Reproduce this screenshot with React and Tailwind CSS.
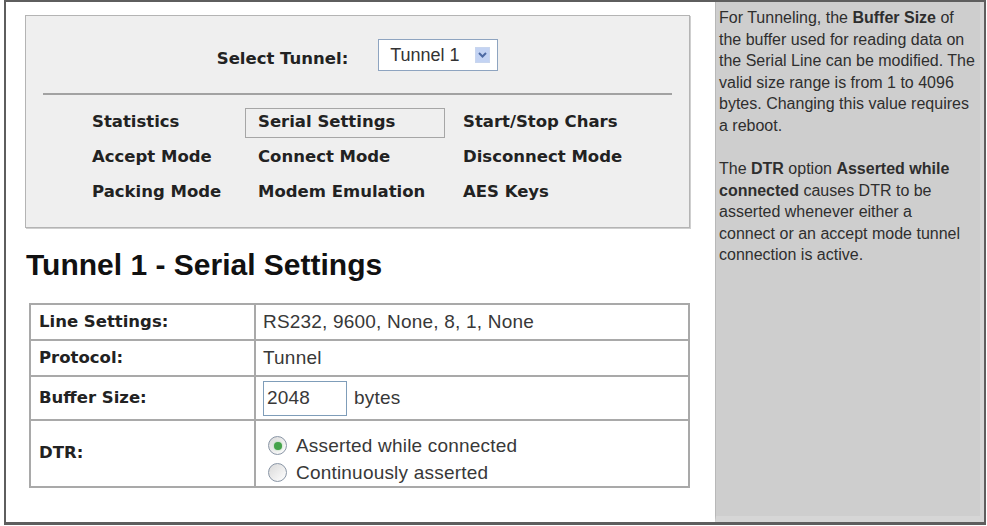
const bold = { fontFamily: '"DejaVu Sans", sans-serif' };

function Radio({ checked }) {
  return (
    <span className="mr-[9px] flex h-[19px] w-[19px] items-center justify-center rounded-full border border-[#8a96a6] bg-gradient-to-br from-[#d9d9d9] to-white">
      {checked && <span className="h-[8px] w-[8px] rounded-full bg-[#46a34b] shadow-[0_0_2px_#8fd18f]" />}
    </span>
  );
}

function Row({ label, children, h, first }) {
  return (
    <div className={`flex ${h} ${first ? '' : 'border-t-2 border-[#a9a9a9]'}`}>
      <div className="flex w-[225px] items-center border-r-2 border-[#a9a9a9] pl-[8px] text-[16.5px] font-bold text-[#222] font-['DejaVu_Sans',sans-serif]">
        {label}
      </div>
      <div className="flex flex-1 items-center pl-[7px] text-[19px] tracking-[0.2px] text-[#383838]">{children}</div>
    </div>
  );
}

const navItems = [
  ['Statistics', 'Serial Settings', 'Start/Stop Chars'],
  ['Accept Mode', 'Connect Mode', 'Disconnect Mode'],
  ['Packing Mode', 'Modem Emulation', 'AES Keys'],
];

export default function App() {
  return (
    <div className="h-[526px] w-[987px] overflow-hidden bg-white font-['Liberation_Sans',Arial,sans-serif]">
      <div className="ml-[4px] flex h-[525px] w-[982px] border-2 border-b-[3px] border-[#5e5e5e]">
        <main className="w-[709px] shrink-0 bg-white">
          <section className="ml-[19px] mt-[13px] h-[213px] w-[665px] border border-[#b4b4b4] bg-[#efefef] shadow-[1px_1px_0_#cfcfcf]">
            <div className="flex items-center justify-center gap-[30px] pt-[23px]">
              <span className="pt-[8px] text-[16.5px] font-bold text-[#222]" style={bold}>
                Select Tunnel:
              </span>
              <div className="flex h-[32px] w-[120px] items-center justify-between border border-[#8ea4c0] bg-white pl-[11px] pr-[7px] text-[18px] text-[#333]">
                <span>Tunnel 1</span>
                <span className="flex h-[16px] w-[15px] items-center justify-center border border-[#c9d6ee] bg-[#c3d3f3]">
                  <svg width="11" height="8" viewBox="0 0 11 8">
                    <path d="M2 2 L5.5 5.5 L9 2" fill="none" stroke="#4d6aa3" strokeWidth="2" />
                  </svg>
                </span>
              </div>
            </div>
            <div className="mx-[17px] mt-[21px] h-[2px] bg-[#a2a2a2]" />
            <div className="ml-[66px] mt-[13px] grid auto-rows-[30px] grid-cols-[153px_218px_auto] gap-y-[5px] text-[16.5px] font-bold text-[#222]" style={bold}>
              {navItems.map((row, r) =>
                row.map((item, c) => (
                  <div
                    key={item}
                    className={
                      c === 1
                        ? `flex w-[200px] items-center pl-[12px] ${r === 0 ? 'border border-[#a6a6a6]' : 'border border-transparent'}`
                        : 'flex items-center'
                    }
                  >
                    {item}
                  </div>
                ))
              )}
            </div>
          </section>

          <h1 className="ml-[20px] mt-[22px] text-[30px] font-bold leading-[30px] text-[#111]">Tunnel 1 - Serial Settings</h1>

          <div className="ml-[23px] mt-[23px] w-[661px] border-2 border-[#a9a9a9]">
            <Row label="Line Settings:" h="h-[34px]" first>
              RS232, 9600, None, 8, 1, None
            </Row>
            <Row label="Protocol:" h="h-[36px]">
              Tunnel
            </Row>
            <Row label="Buffer Size:" h="h-[44px]">
              <div className="flex h-[35px] w-[84px] items-center border border-[#7f9db9] bg-white pl-[3px]">2048</div>
              <span className="ml-[7px]">bytes</span>
            </Row>
            <Row label="DTR:" h="h-[67px]">
              <div className="self-start pl-[5px] pt-[11px] leading-[27px]">
                <div className="flex items-center">
                  <Radio checked />
                  Asserted while connected
                </div>
                <div className="flex items-center">
                  <Radio />
                  Continuously asserted
                </div>
              </div>
            </Row>
          </div>
        </main>

        <aside className="min-w-0 flex-1 overflow-hidden border-b-[6px] border-l border-r-[4px] border-[#d6d6d6] border-l-[#b8b8b8] bg-[#cecece] pl-[3px] pt-[5px] text-[16px] leading-[21.5px] text-[#2e2e2e] whitespace-nowrap">
          <p>
            For Tunneling, the <b>Buffer Size</b> of
            <br />
            the buffer used for reading data on
            <br />
            the Serial Line can be modified. The
            <br />
            valid size range is from 1 to 4096
            <br />
            bytes. Changing this value requires
            <br />a reboot.
          </p>
          <p className="mt-[22px]">
            The <b>DTR</b> option <b>Asserted while</b>
            <br />
            <b>connected</b> causes DTR to be
            <br />
            asserted whenever either a
            <br />
            connect or an accept mode tunnel
            <br />
            connection is active.
          </p>
        </aside>
      </div>
    </div>
  );
}
